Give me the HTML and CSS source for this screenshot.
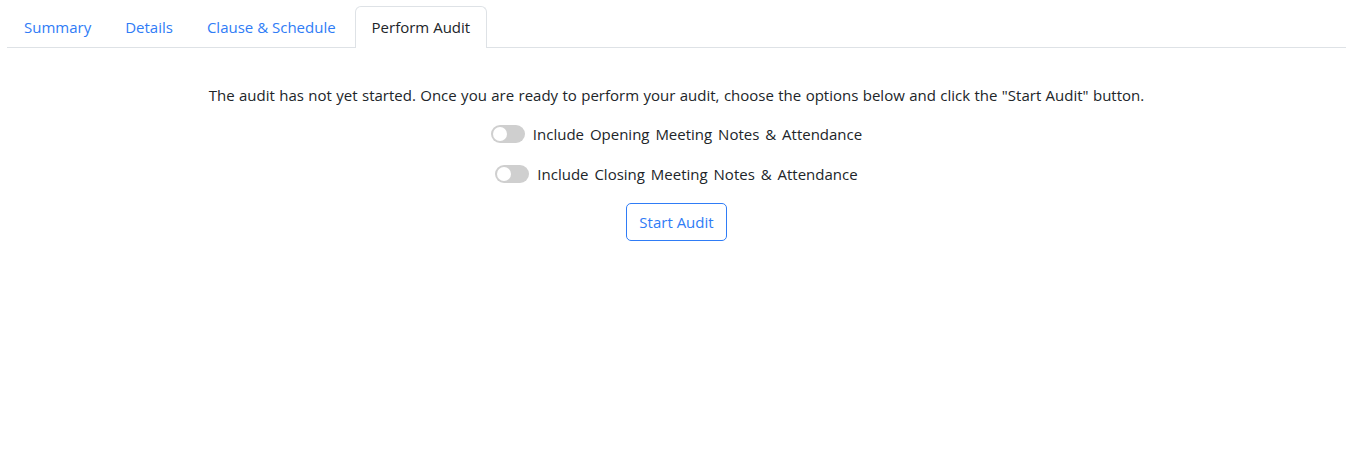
FILE: index.html
```html
<!DOCTYPE html>
<html>
<head>
<meta charset="utf-8">
<link rel="stylesheet" href="styles.css">
</head>
<body>
<div class="page">
  <ul class="tabs">
    <li class="tab">Summary</li>
    <li class="tab">Details</li>
    <li class="tab">Clause &amp; Schedule</li>
    <li class="tab active">Perform Audit</li>
  </ul>
  <div class="content">
    <p class="intro">The audit has not yet started. Once you are ready to perform your audit, choose the options below and click the "Start Audit" button.</p>
    <label class="option"><span class="switch"></span>Include Opening Meeting Notes &amp; Attendance</label>
    <label class="option"><span class="switch"></span>Include Closing Meeting Notes &amp; Attendance</label>
    <button class="btn">Start Audit</button>
  </div>
</div>
</body>
</html>
```

FILE: styles.css
```css
html, body { margin: 0; background: #fff; }
body {
  font-family: "Open Sans", "Noto Sans", sans-serif;
  font-size: 15px;
  color: #212529;
  padding: 6px 12px 0 7px;
}
.tabs {
  list-style: none;
  margin: 0;
  padding: 0;
  display: flex;
  border-bottom: 1px solid #dee2e6;
}
.tab {
  padding: 0 16px;
  height: 40px;
  line-height: 40px;
  color: #2f7cf6;
  border: 1px solid transparent;
  border-bottom: none;
  border-radius: 6px 6px 0 0;
  margin-bottom: -1px;
  background: #fff;
}
.tab:nth-child(3) { padding-right: 18px; }
.tab.active {
  color: #212529;
  border-color: #dee2e6;
  height: 41px;
}
.content {
  display: flex;
  flex-direction: column;
  align-items: center;
  padding-top: 36px;
}
.intro {
  margin: 0 0 17px;
  line-height: 22px;
  word-spacing: 0.5px;
}
.option {
  display: flex;
  align-items: center;
  gap: 8px;
  height: 22px;
  margin-bottom: 18px;
  word-spacing: 2px;
}
.switch {
  width: 34px;
  height: 18px;
  border-radius: 9px;
  background: #cfcfcf;
  position: relative;
}
.switch::after {
  content: "";
  position: absolute;
  left: 2px;
  top: 2px;
  width: 14px;
  height: 14px;
  border-radius: 50%;
  background: #fff;
}
.btn {
  font-family: inherit;
  font-size: 15px;
  color: #2f7cf6;
  background: #fff;
  border: 1px solid #2f7cf6;
  border-radius: 5px;
  padding: 0 12px;
  height: 38px;
  margin-top: 0;
}
```
